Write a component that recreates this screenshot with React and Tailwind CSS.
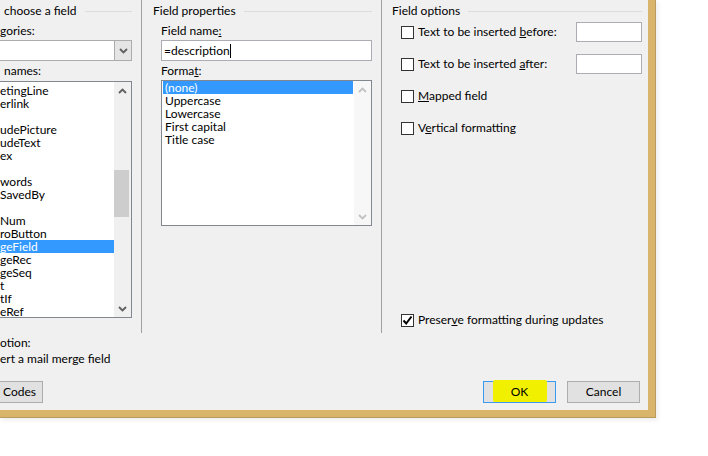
import React from "react";

const Chevron = ({ dir = "down", color = "#5f5f5f" }) => (
  <svg width="9" height="6" viewBox="0 0 9 6">
    <path
      d={dir === "down" ? "M1 1 L4.5 4.5 L8 1" : "M1 5 L4.5 1.5 L8 5"}
      fill="none"
      stroke={color}
      strokeWidth="1.8"
    />
  </svg>
);

const CheckBox = ({ checked }) => (
  <span className="w-[13px] h-[13px] border border-[#333333] bg-white flex items-center justify-center shrink-0">
    {checked && (
      <svg width="11" height="11" viewBox="0 0 11 11">
        <path d="M1.5 5.5 L4.2 8.5 L9.5 1.5" fill="none" stroke="#000" strokeWidth="2" />
      </svg>
    )}
  </span>
);

const GroupTitle = ({ text, pl, mr }) => (
  <div className={`h-[22px] flex items-center ${pl}`}>
    <span className="whitespace-pre">{text}</span>
    <span className={`flex-1 h-px bg-[#dcdcdc] ml-[8px] ${mr}`} />
  </div>
);

const fieldNames = [
  "etingLine", "erlink", "", "udePicture", "udeText", "ex", "", "words", "SavedBy",
  "", "Num", "roButton", "geField", "geRec", "geSeq", "t", "tIf", "eRef",
];

const formats = ["(none)", "Uppercase", "Lowercase", "First capital", "Title case"];

export default function App() {
  return (
    <div className="w-[708px] h-[456px] bg-white overflow-hidden font-[Lato,'Noto_Sans',sans-serif] text-[12px] text-black">
      <div className="w-[656px] h-[418px] bg-[#d9b56c] border-r border-b border-[#b99b5f] shadow-[2px_2px_5px_rgba(0,0,0,0.08)]">
        <div className="w-[648px] h-[410px] bg-[#f0f0f0] flex flex-col">
          <div className="h-[333px] flex">
            {/* left: choose a field */}
            <div className="w-[142px] border-r border-[#a0a0a0] flex flex-col">
              <GroupTitle text=" choose a field" pl="pl-[1px]" mr="mr-[9px]" />
              <div className="h-[18px] flex items-center">gories:</div>
              <div className="w-[132px] h-[21px] border border-l-0 border-[#acacac] bg-white flex justify-end">
                <div className="w-[17px] h-full bg-[#e5e5e5] border-l border-[#acacac] flex items-center justify-center">
                  <Chevron />
                </div>
              </div>
              <div className="h-[20px] flex items-center pl-[4px]">names:</div>
              <div className="w-[132px] h-[237px] border border-l-0 border-[#828790] bg-white flex">
                <div className="flex-1 pt-[2px]">
                  {fieldNames.map((name, i) => (
                    <div
                      key={i}
                      className={`h-[13px] leading-[13px] whitespace-nowrap ${
                        name === "geField" ? "bg-[#3399ff] text-white" : ""
                      }`}
                    >
                      {name}
                    </div>
                  ))}
                </div>
                <div className="w-[17px] bg-[#f0f0f0] flex flex-col">
                  <div className="h-[17px] flex items-center justify-center">
                    <Chevron dir="up" />
                  </div>
                  <div className="flex-1">
                    <div className="mt-[71px] w-[15px] h-[47px] bg-[#cdcdcd]" />
                  </div>
                  <div className="h-[17px] flex items-center justify-center">
                    <Chevron />
                  </div>
                </div>
              </div>
            </div>

            {/* middle: field properties */}
            <div className="w-[240px] border-r border-[#a0a0a0] flex flex-col">
              <GroupTitle text="Field properties" pl="pl-[11px]" mr="mr-[9px]" />
              <div className="h-[18px] flex items-center pl-[19px]">
                Field name<u>:</u>
              </div>
              <div className="ml-[19px] w-[211px] h-[21px] border border-[#abadb3] bg-white pl-[2px] flex items-center">
                <span>=description</span>
                <span className="w-px h-[14px] bg-black" />
              </div>
              <div className="h-[19px] flex items-center pl-[19px]">
                Forma<u>t</u>:
              </div>
              <div className="ml-[19px] w-[211px] h-[146px] border border-[#828790] bg-white flex">
                <div className="flex-1 px-[1px]">
                  {formats.map((f, i) => (
                    <div
                      key={f}
                      className={`h-[13px] leading-[13px] pl-[2px] ${
                        i === 0 ? "bg-[#3399ff] text-white" : ""
                      }`}
                    >
                      {f}
                    </div>
                  ))}
                </div>
                <div className="w-[17px] bg-[#f7f7f7] flex flex-col justify-between">
                  <div className="h-[17px] flex items-center justify-center">
                    <Chevron dir="up" color="#c2c2c2" />
                  </div>
                  <div className="h-[17px] flex items-center justify-center">
                    <Chevron color="#c2c2c2" />
                  </div>
                </div>
              </div>
            </div>

            {/* right: field options */}
            <div className="flex-1 flex flex-col">
              <GroupTitle text="Field options" pl="pl-[10px]" mr="mr-[6px]" />
              <div className="flex flex-col gap-[12px]">
                <div className="h-[20px] flex items-center pl-[19px]">
                  <CheckBox />
                  <span className="ml-[4px]">
                    Text to be inserted <u>b</u>efore:
                  </span>
                  <span className="ml-auto mr-[6px] w-[66px] h-[20px] border border-[#abadb3] bg-white" />
                </div>
                <div className="h-[20px] flex items-center pl-[19px]">
                  <CheckBox />
                  <span className="ml-[4px]">
                    Text to be inserted <u>a</u>fter:
                  </span>
                  <span className="ml-auto mr-[6px] w-[66px] h-[20px] border border-[#abadb3] bg-white" />
                </div>
                <div className="h-[20px] flex items-center pl-[19px]">
                  <CheckBox />
                  <span className="ml-[4px]">
                    <u>M</u>apped field
                  </span>
                </div>
                <div className="h-[20px] flex items-center pl-[19px]">
                  <CheckBox />
                  <span className="ml-[4px]">
                    V<u>e</u>rtical formatting
                  </span>
                </div>
              </div>
              <div className="mt-auto mb-[3px] h-[20px] flex items-center pl-[19px]">
                <CheckBox checked />
                <span className="ml-[4px]">
                  Preser<u>v</u>e formatting during updates
                </span>
              </div>
            </div>
          </div>

          {/* bottom */}
          <div className="flex-1 flex flex-col">
            <div className="h-[16px] mt-[2px] flex items-center">otion:</div>
            <div className="h-[16px] flex items-center">ert a mail merge field</div>
            <div className="mt-[14px] flex items-center">
              <div className="w-[43px] h-[22px] border border-l-0 border-[#adadad] bg-[#e1e1e1] flex items-center pl-[3px]">
                Codes
              </div>
              <div className="ml-auto w-[73px] h-[22px] border border-[#3c99f0] bg-[#e1e1e1] relative flex items-center justify-center">
                <span className="absolute left-[9px] top-[-2px] w-[54px] h-[22px] bg-[#f0f000] rounded-[2px]" />
                <span className="relative">OK</span>
              </div>
              <div className="ml-[11px] mr-[8px] w-[73px] h-[22px] border border-[#adadad] bg-[#e1e1e1] flex items-center justify-center">
                Cancel
              </div>
            </div>
          </div>
        </div>
      </div>
    </div>
  );
}
